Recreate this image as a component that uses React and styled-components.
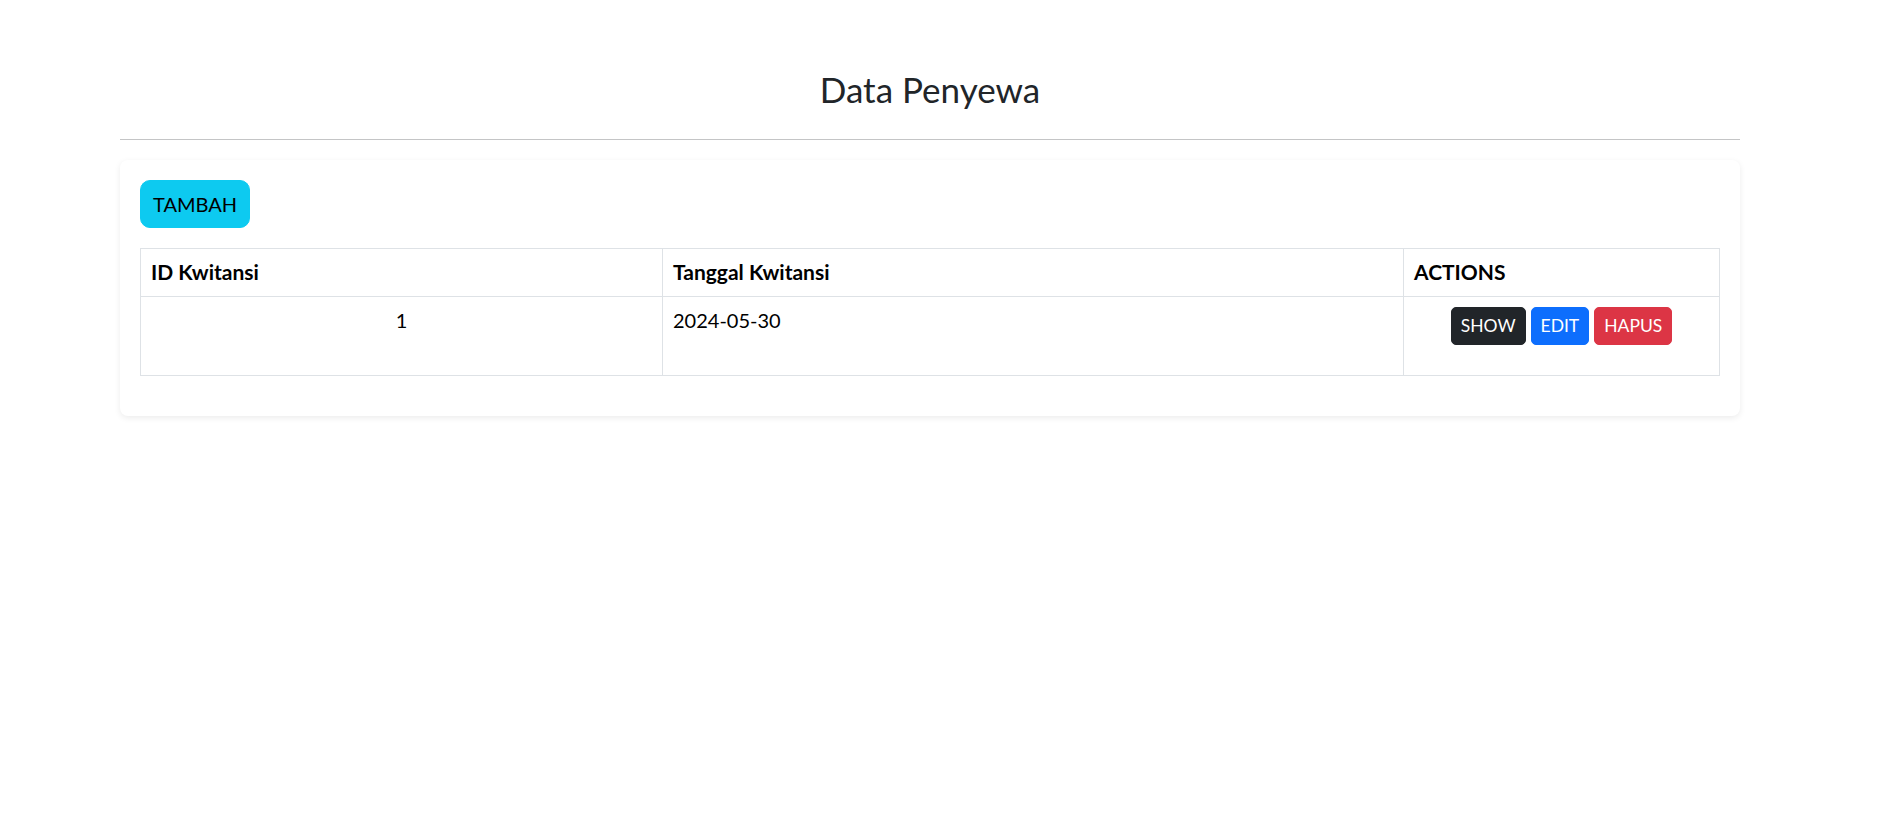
import React from "react";
import styled, { createGlobalStyle } from "styled-components";

const GlobalStyle = createGlobalStyle`
  body {
    margin: 0;
    background: #fff;
    font-family: Lato, "Open Sans", "Liberation Sans", sans-serif;
    color: #212529;
  }
`;

const Page = styled.div`
  padding: 68px 150px 40px 120px;
`;

const Title = styled.h3`
  margin: 0;
  font-size: 35px;
  line-height: 42px;
  font-weight: 400;
  text-align: center;
  color: #212529;
`;

const Divider = styled.hr`
  margin: 29px 0 20px;
  border: 0;
  border-top: 1px solid #c4c5c6;
`;

const Card = styled.div`
  background: #fff;
  border-radius: 8px;
  box-shadow: 0 2px 6px rgba(0, 0, 0, 0.08);
  padding: 20px;
`;

const Toolbar = styled.div`
  display: flex;
  margin-bottom: 20px;
`;

const AddButton = styled.button`
  font-family: inherit;
  font-size: 20px;
  line-height: 30px;
  padding: 8px 12px;
  border: 1px solid #0dcaf0;
  border-radius: 10px;
  background: #0dcaf0;
  color: #000;
  cursor: pointer;
`;

const Table = styled.table`
  width: 100%;
  margin-bottom: 20px;
  border-collapse: collapse;
  table-layout: fixed;
  color: #000;
  font-size: 20px;
  line-height: 30px;
`;

const HeadCell = styled.th`
  box-sizing: border-box;
  width: ${(p) => p.$width || "auto"};
  text-align: left;
  font-size: 21px;
  font-weight: 700;
  padding: 8px 10px 9px;
  border: 1px solid #dee2e6;
`;

const Cell = styled.td`
  vertical-align: top;
  text-align: ${(p) => (p.$center ? "center" : "left")};
  padding: 8px 10px;
  height: 62px;
  border: 1px solid #dee2e6;
`;

const ActionGroup = styled.div`
  display: flex;
  justify-content: center;
  gap: 5px;
  padding-top: 2px;
`;

const colors = {
  dark: "#212529",
  primary: "#0d6efd",
  danger: "#dc3545",
};

const ActionButton = styled.button`
  font-family: inherit;
  font-size: 17.5px;
  line-height: 26px;
  padding: 5px 9px;
  border: 1px solid ${(p) => colors[p.$variant]};
  border-radius: 5px;
  background: ${(p) => colors[p.$variant]};
  color: #fff;
  cursor: pointer;
`;

const rows = [{ id: 1, tanggal: "2024-05-30" }];

export default function App() {
  return (
    <>
      <GlobalStyle />
      <Page>
        <Title>Data Penyewa</Title>
        <Divider />
        <Card>
          <Toolbar>
            <AddButton>TAMBAH</AddButton>
          </Toolbar>
          <Table>
            <thead>
              <tr>
                <HeadCell $width="522px">ID Kwitansi</HeadCell>
                <HeadCell $width="741px">Tanggal Kwitansi</HeadCell>
                <HeadCell>ACTIONS</HeadCell>
              </tr>
            </thead>
            <tbody>
              {rows.map((r) => (
                <tr key={r.id}>
                  <Cell $center>{r.id}</Cell>
                  <Cell>{r.tanggal}</Cell>
                  <Cell>
                    <ActionGroup>
                      <ActionButton $variant="dark">SHOW</ActionButton>
                      <ActionButton $variant="primary">EDIT</ActionButton>
                      <ActionButton $variant="danger">HAPUS</ActionButton>
                    </ActionGroup>
                  </Cell>
                </tr>
              ))}
            </tbody>
          </Table>
        </Card>
      </Page>
    </>
  );
}
